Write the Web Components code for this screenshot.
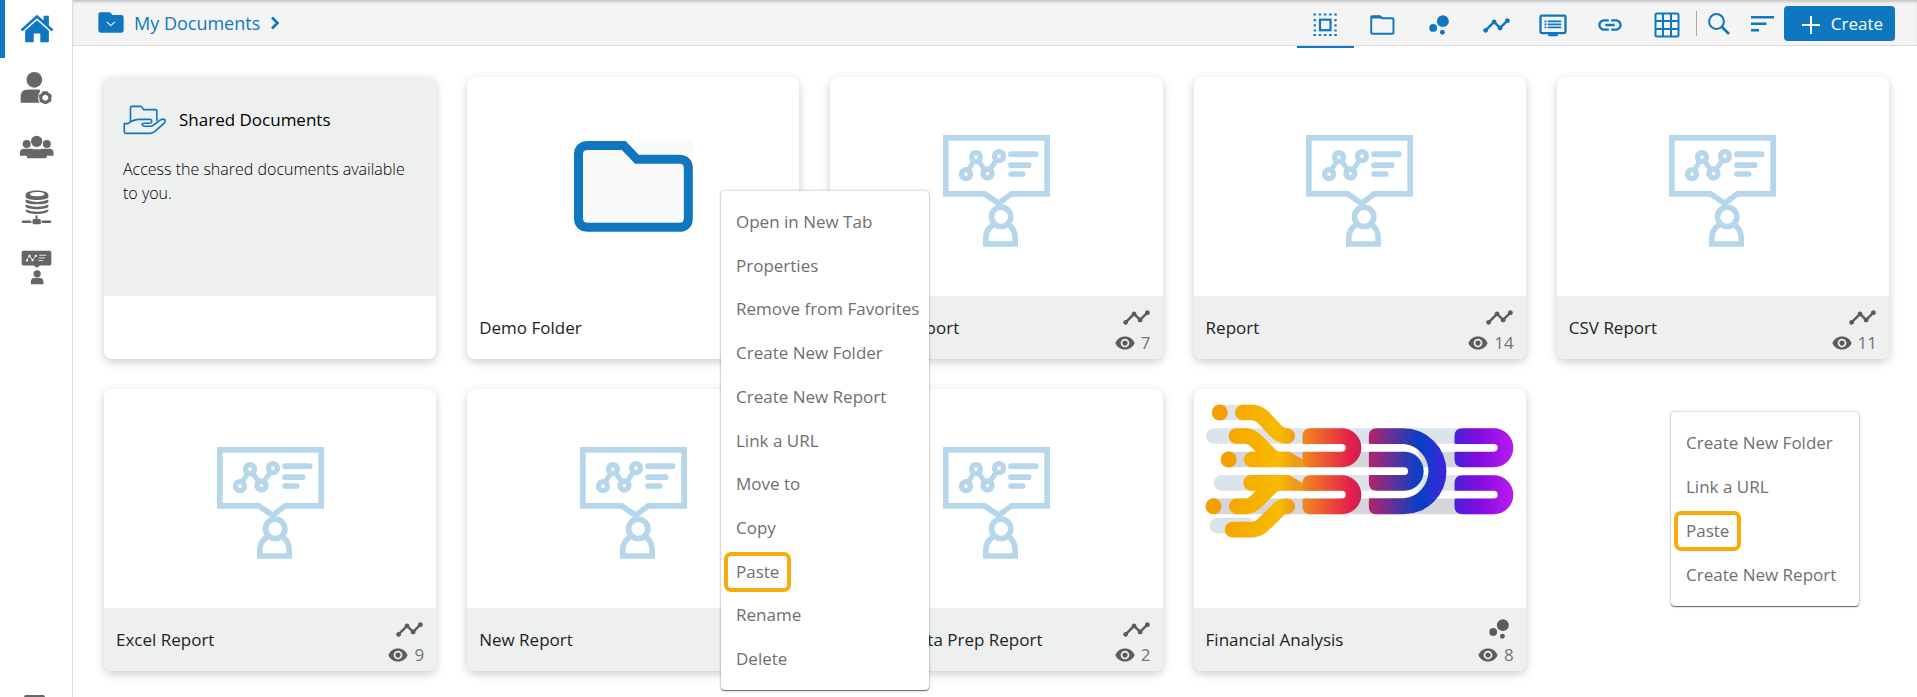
<!DOCTYPE html>
<html lang="en">
<head>
<meta charset="utf-8">
<title>My Documents</title>
<style>
  html, body { height: 100%; }
  body {
    margin: 0;
    overflow: hidden;
    background: #fff;
    color: #222;
    font: 400 17px/24px "Open Sans", "Noto Sans", sans-serif;
    --brand: #0f77c0;
    --muted: #5c5c5c;
    --panel: #eef0f0;
  }
</style>
</head>
<body>
<documents-page></documents-page>

<script>
const ICONS = {
  home: ['60 40 102 88', `<path d="M111 42 L131 60 V45 H147 V75 L161 87 L155 92 L111 53 L67 92 L61 87 Z"/><path d="M111 59 L147 91 V123 q0 3-3 3 H121 V99 H101 V126 H78 q-3 0-3-3 V91 Z"/>`],
  usercog: ['58 211 96 98', `<circle cx="101" cy="237" r="23.500"/><path d="M60 306 V288 Q60 266 82 266 H113 Q120 266 118 272 Q108 288 116 306 Z"/><path fill="none" stroke="currentColor" stroke-width="9" d="M134 277 a13.500 13.500 0 1 1 -.1 0"/><path fill="none" stroke="currentColor" stroke-width="9" stroke-dasharray="7 7.600" d="M134 275 a15.500 15.500 0 1 1 -.1 0"/>`],
  team: ['58 408 104 72', `<circle cx="110.500" cy="427" r="17"/><circle cx="80.500" cy="435" r="12"/><circle cx="141" cy="435" r="12"/><path d="M60 470 V462 Q60 449 73 449 H95 L100 451 H121 L126 449 H149 Q161 449 161 462 V470 H141 V473 Q141 478 136 478 H86 Q81 478 81 473 V470 Z"/>`],
  database: ['62 571 92 106', `<path fill-rule="evenodd" d="M75 586 C75 568 144 568 144 586 V592 C144 604 75 604 75 592 Z M88 584 C88 592 132 592 132 584 C132 575 88 575 88 584 Z"/><path d="M75 600 Q110 614 144 600 V607 C140 617 79 617 75 607 Z M75 615 Q110 629 144 615 V621 C140 632 79 632 75 621 Z M75 630 Q110 644 144 630 V634 C140 647 79 647 75 634 Z"/><rect x="105" y="648" width="6" height="14"/><rect x="96" y="659" width="25" height="16" rx="4"/><rect x="63" y="663" width="30" height="8" rx="4"/><rect x="123" y="663" width="30" height="8" rx="4"/>`],
  presenter: ['62 751 92 106', `<path d="M68 753 H148 q5 0 5 5 V793 q0 5-5 5 H119 L109 805 L99 798 H68 q-5 0-5-5 V758 q0-5 5-5z"/><g stroke="#fff" fill="none" stroke-width="2.500"><path d="M79 782 L87 769 L96 781 L106 769 M116 767 H138 M115 775 H133 M114 783 H128"/></g><g fill="#fff"><circle cx="79" cy="783" r="3.500"/><circle cx="87" cy="769" r="3.500"/><circle cx="96" cy="782" r="3.500"/><circle cx="106" cy="769" r="3.500"/></g><circle cx="110" cy="823" r="11"/><path d="M91 855 V847 Q91 836 102 836 H118 Q129 836 129 847 V855 Z"/>`],
  panel: ['0 0 21 21', `<rect x="1" y="1" width="19" height="19" rx="1" fill="none" stroke="currentColor" stroke-width="2"/>`],
  folderdrop: ['293 35 77 62', `<path d="M300 36 H325 q5 0 8 4 L336 44 H362 q7 0 7 7 V89 q0 7-7 7 H301 q-7 0-7-7 V43 q0-7 6-7z"/><path d="M319 64 L331 75 L343 64" fill="none" stroke="#fff" stroke-width="3"/>`],
  chevron: ['0 0 10 14', `<path d="M2 1.500 L7.500 7 L2 12.500" fill="none" stroke="currentColor" stroke-width="2.600"/>`],
  select: ['0 0 24 24', `<path fill="none" stroke="currentColor" stroke-width="2" stroke-dasharray="2.500 2.700" d="M.5 1.500 H23.800 M.5 22 H23.800"/><path fill="none" stroke="currentColor" stroke-width="2.200" stroke-dasharray="2.200 3" d="M1.800 6 V19 M22.500 6 V19"/><rect x="7" y="6.700" width="10.500" height="10.500" fill="none" stroke="currentColor" stroke-width="2.200"/>`],
  folder: ['240 44 76 62', `<path fill="none" stroke="currentColor" stroke-width="6" d="M243 52 q0-4 4-4 H270 L277 54 H308 q4 0 4 4 V98 q0 4-4 4 H247 q-4 0-4-4z"/><path d="M242 46 H271 L280 55 H242z"/>`],
  bubbles: ['418 44 62 62', `<circle cx="461" cy="63" r="18.500"/><circle cx="431" cy="84" r="12"/><circle cx="459.500" cy="97.500" r="7.500"/>`],
  trend: ['0 5 24 14', `<path d="M23 8c0 1.100-.9 2-2 2-.18 0-.35-.02-.51-.07l-3.560 3.550c.05.16.07.34.07.52 0 1.100-.9 2-2 2s-2-.9-2-2c0-.18.02-.36.07-.52l-2.550-2.550c-.16.05-.34.07-.52.07s-.36-.02-.52-.07l-4.550 4.560c.05.16.07.33.07.51 0 1.100-.9 2-2 2s-2-.9-2-2 .9-2 2-2c.18 0 .35.02.51.07l4.560-4.550C8.020 9.360 8 9.180 8 9c0-1.100.9-2 2-2s2 .9 2 2c0 .18-.02.36-.07.52l2.550 2.550c.16-.05.34-.07.52-.07s.36.02.52.07l3.550-3.560C19.020 8.350 19 8.180 19 8c0-1.100.9-2 2-2s2 .9 2 2z"/>`],
  display: ['749 40 84 70', `<rect x="753" y="45" width="76" height="53" rx="4" fill="none" stroke="currentColor" stroke-width="7"/><path d="M776 100 H806 V105 q0 3-3 3 H779 q-3 0-3-3z M765 60 h6 v5 h-6z M765 69 h6 v5 h-6z M765 78 h6 v5 h-6z M775 60 h41 v5 h-41z M775 69 h41 v5 h-41z M775 78 h41 v5 h-41z"/>`],
  link: ['1 6 22 12', `<path d="M3.900 12c0-1.710 1.390-3.100 3.100-3.100h4V7H7c-2.760 0-5 2.240-5 5s2.240 5 5 5h4v-1.900H7c-1.710 0-3.100-1.390-3.100-3.100zM8 13h8v-2H8v2zm9-6h-4v1.900h4c1.710 0 3.100 1.390 3.100 3.100s-1.390 3.100-3.100 3.100h-4V17h4c2.760 0 5-2.240 5-5s-2.240-5-5-5z"/>`],
  grid: ['0 0 26 26', `<path fill="none" stroke="currentColor" stroke-width="2" d="M1.500 3 q0-1.500 1.500-1.500 H23 q1.500 0 1.500 1.500 V23 q0 1.500-1.500 1.500 H3 q-1.500 0-1.500-1.500z M9 2 V24 M17 2 V24 M2 9 H24 M2 17 H24"/>`],
  search: ['0 0 22 22', `<circle cx="8.500" cy="8.500" r="7.400" fill="none" stroke="currentColor" stroke-width="2"/><path d="M13.500 13.500 L21 21" stroke="currentColor" stroke-width="2.600"/>`],
  sort: ['0 0 23 16', `<path d="M0 0 H23 V2.500 H0z M0 6.500 H15.500 V9 H0z M0 13 H8 V15.500 H0z"/>`],
  plus: ['0 0 18 18', `<path d="M8 0 H10 V8 H18 V10 H10 V18 H8 V10 H0 V8 H8z"/>`],
  eye: ['1 4 22 16', `<path d="M12 4.500C7 4.500 2.730 7.610 1 12c1.730 4.390 6 7.500 11 7.500s9.270-3.110 11-7.500c-1.730-4.390-6-7.500-11-7.500zM12 17c-2.760 0-5-2.240-5-5s2.240-5 5-5 5 2.240 5 5-2.240 5-5 5zm0-8c-1.660 0-3 1.340-3 3s1.340 3 3 3 3-1.340 3-3-1.340-3-3-3z"/>`],
  share: ['97 137 132 92', `<g fill="none" stroke="currentColor" stroke-width="5" stroke-linejoin="round" stroke-linecap="round"><path d="M120 187 V146 q0-5 5-5 H151 q3 0 5 4 L160 151 H197 q4 0 4 4 V184"/><path d="M101 194 H112 Q130 181 148 181 H180 Q186 182 185 188 Q184 193 178 193 H162 Q155 194 156 198 Q158 202 164 202 H182 Q188 202 194 196 L213 182 Q222 178 226 183 Q228 188 222 194 L194 219 Q188 224 181 224 H105 Q101 224 101 220 Z"/></g>`],
  bigfolder: ['342 240 357 279', `<path fill="#fafafa" d="M342 240H699V519H342z"/><path fill="none" stroke="currentColor" stroke-width="27" d="M385.500 256.500 H491 L531 298 H657 q28 0 28 28 V474 q0 28-28 28 H385 q-29.500 0-29.500-28 V284 q0-27.500 30-27.500z"/>`],
  report: ['129 225 321 336', `<g fill="none" stroke="currentColor"><path stroke-width="17" d="M296 430 L254 401.500 H137.500 V233.500 H441.500 V401.500 H334 L292 433"/><path stroke-width="15" d="M198 342 L228 292 L262 340 L297 289"/><path stroke-width="17" stroke-linecap="round" d="M333 282.500 H407 M333 315.500 H386 M333 342 H368"/><circle stroke-width="17" cx="303.500" cy="470.500" r="29"/><path stroke-width="17" d="M280 494 Q257.500 508 257.500 534 V552 H345.500 V534 Q345 508 326 494"/></g><g stroke="currentColor" stroke-width="16" fill="#fff"><circle cx="198" cy="342.500" r="13.500"/><circle cx="228" cy="291.500" r="13.500"/><circle cx="262.500" cy="340.500" r="13.500"/><circle cx="297" cy="288.500" r="13.500"/></g>`],
  bdb: ['78 70 926 402', `
    <defs>
      <linearGradient id="y" gradientUnits="userSpaceOnUse" x1="80" x2="348" y1="0" y2="0"><stop stop-color="#f39c00"/><stop offset=".82" stop-color="#f8bb00"/><stop offset="1" stop-color="#f09a18"/></linearGradient>
      <linearGradient id="r"><stop stop-color="#f08a1c"/><stop offset=".8" stop-color="#e62048"/><stop offset="1" stop-color="#c81e5c"/></linearGradient>
      <linearGradient id="b" gradientUnits="userSpaceOnUse" x1="569" x2="803" y1="0" y2="0"><stop stop-color="#b3246a"/><stop offset=".65" stop-color="#073fc8"/><stop offset="1" stop-color="#4226da"/></linearGradient>
      <linearGradient id="p"><stop stop-color="#4a20d8"/><stop offset=".45" stop-color="#860be0"/><stop offset="1" stop-color="#ba1cf0"/></linearGradient>
    </defs>
    <g fill="none" stroke-width="47" stroke-linecap="round">
      <path stroke="#dce4eb" d="M122 95.500H200M104 166H940M127 306.500H940M115 435H205"/>
      <path stroke="#d5d6dc" d="M149 236.500H940M103 377H940"/>
      <g stroke="url(#y)"><path d="M191.500 95.500H222Q238 97 250 108L288 148Q300 164 318 166H324M172 166H200Q218 168 230 180L262 212Q278 234 300 236.500H324M218 236.600H324L323 236M216 306.600H324L323 306M173 377H202Q218 375 230 363L270 324Q282 308 300 306.500M160 447H222Q238 445 250 434L290 395Q302 379 318 377H324"/></g>
    </g>
    <path stroke="#fff" stroke-width="23" d="M370 201.500H495M370 342H495M569 201.500H680M569 272H675M569 342H680M826 201.500H950M826 342H950"/>
    <g fill="#f3a000"><circle cx="122" cy="95.500" r="24"/><circle cx="148.500" cy="236.500" r="24"/><circle cx="103" cy="377" r="24"/></g>
    <path fill="#fff" d="M680 190a82 82 0 0 1 0 163.500V330a58.500 58.500 0 0 0 0-117z"/>
    <path fill="#dce4eb" d="M733 283H757Q755 310 742 330H712Q731 315 733 283z"/><path fill="#d5d6dc" d="M712 213H735Q755 230 756 260H732Q730 230 712 213z"/>
    <path fill="url(#b)" d="M593 143H673a129 129 0 0 1 0 258H593q-24 0-24-24V357q0-4 4-4H675A82 82 0 0 0 675 190H573q-4 0-4-4V167q0-24 24-24zM573 213H675a58.500 58.500 0 0 1 0 117H593q-24 0-24-24V287q0-4 4-4H675a11.500 11.500 0 0 0 0-23H573q-4 0-4-4V217q0-4 4-4z"/>
    <g fill="url(#r)"><path d="M394 143H488a58.500 58.500 0 0 1 0 117H394q-24 0-24-24V217q0-4 4-4H488a11.500 11.500 0 0 0 0-23H374q-4 0-4-4V167q0-24 24-24z"/><path d="M394 283.500H488a58.500 58.500 0 0 1 0 117H394q-24 0-24-24V357.500q0-4 4-4H488a11.500 11.500 0 0 0 0-23H374q-4 0-4-4V307.500q0-24 24-24z"/></g>
    <g fill="url(#p)"><path d="M850 143H944a58.500 58.500 0 0 1 0 117H850q-24 0-24-24V217q0-4 4-4H944a11.500 11.500 0 0 0 0-23H830q-4 0-4-4V167q0-24 24-24z"/><path d="M850 283.500H944a58.500 58.500 0 0 1 0 117H850q-24 0-24-24V357.500q0-4 4-4H944a11.500 11.500 0 0 0 0-23H830q-4 0-4-4V307.500q0-24 24-24z"/></g>`]
};

class ShadowElement extends HTMLElement {
  connectedCallback() {
    if (this.shadowRoot) return;
    this.attachShadow({ mode: 'open' }).innerHTML = this.render();
  }
  attr(name, fallback = '') { return this.getAttribute(name) ?? fallback; }
}

customElements.define('app-icon', class extends ShadowElement {
  render() {
    const [box, body] = ICONS[this.attr('name')];
    return `<style>
      :host { display: block; flex: none; }
      svg { display: block; width: ${this.attr('w')}px; height: ${this.attr('h')}px; }
    </style><svg viewBox="${box}" fill="currentColor" aria-hidden="true">${body}</svg>`;
  }
});

customElements.define('side-nav', class extends ShadowElement {
  render() {
    const link = (name, w, h, label, cls = '') =>
      `<a href="#${name}" class="${cls}" aria-label="${label}"><app-icon name="${name}" w="${w}" h="${h}"></app-icon></a>`;
    return `<style>
      :host { display: block; box-sizing: border-box; height: 100%; overflow: hidden; background: #fff; border-right: 1px solid #dcdcdc; }
      nav { display: flex; flex-direction: column; height: 100%; }
      a { display: grid; place-items: center; box-sizing: border-box; flex: none; height: 60px; padding-bottom: 2px; color: #666; }
      a.active { height: 58px; border-left: 5px solid var(--brand); padding-right: 4px; color: var(--brand); }
      a.last { margin-top: auto; margin-bottom: -39px; padding-right: 3px; }
    </style><nav aria-label="Main">
      ${link('home', 34, 29, 'Home', 'active')}
      ${link('usercog', 32, 33, 'User settings')}
      ${link('team', 35, 24, 'Groups')}
      ${link('database', 31, 35, 'Data center')}
      ${link('presenter', 31, 35, 'Presenter')}
      ${link('panel', 21, 21, 'More', 'last')}
    </nav>`;
  }
});

customElements.define('top-bar', class extends ShadowElement {
  render() {
    const tab = (name, w, h, label, cls = '') =>
      `<button type="button" class="tab ${cls}" aria-label="${label}"><app-icon name="${name}" w="${w}" h="${h}"></app-icon></button>`;
    return `<style>
      :host { display: flex; box-sizing: border-box; height: 46px; align-items: stretch; padding: 0 22px 0 25px; color: var(--brand);
        background: #f4f4f4; border-bottom: 1px solid #dcdcdc; box-shadow: inset 0 3px 3px -1px #c4c4c4; }
      button { font: inherit; color: inherit; background: none; border: 0; margin: 0; padding: 0; cursor: pointer; }
      a { display: flex; align-items: center; gap: 10px; color: inherit; text-decoration: none; font-size: 18px; margin-right: auto; }
      .tabs { display: flex; }
      .tab { display: grid; place-items: center; box-sizing: content-box; width: 57px; padding-top: 4px; margin-bottom: -3px; border-bottom: 2px solid transparent; }
      .tab.active { border-color: var(--brand); }
      .tools { display: flex; align-items: center; gap: 21px; margin: 11px 10px 9px 0; padding-left: 11px; border-left: 1px solid #a8a8a8; }
      .create { display: flex; align-items: center; gap: 11px; align-self: center; height: 35px; padding: 0 12px 0 18px;
        border-radius: 4px; background: var(--brand); color: #fff; margin-top: 2px; }
      .create app-icon { margin-top: 3px; }
    </style>
    <a href="#my-documents"><app-icon name="folderdrop" w="26" h="21"></app-icon><span>My Documents</span><app-icon name="chevron" w="10" h="14"></app-icon></a>
    <div class="tabs">
      ${tab('select', 24, 24, 'All', 'active')}
      ${tab('folder', 25, 20, 'Folders')}
      ${tab('bubbles', 20, 20, 'Stories')}
      ${tab('trend', 29, 17, 'Dashboards')}
      ${tab('display', 28, 23, 'Reports')}
      ${tab('link', 26, 14, 'Links')}
      ${tab('grid', 26, 26, 'Sheets')}
    </div>
    <div class="tools">
      <button type="button" aria-label="Search"><app-icon name="search" w="22" h="22"></app-icon></button>
      <button type="button" aria-label="Sort"><app-icon name="sort" w="23" h="16"></app-icon></button>
    </div>
    <button type="button" class="create"><app-icon name="plus" w="18" h="18"></app-icon>Create</button>`;
  }
});

customElements.define('doc-card', class extends ShadowElement {
  render() {
    const views = this.attr('views');
    const kind = this.attr('kind', 'trend');
    const [kw, kh] = kind === 'bubbles' ? [20, 20] : [29, 17];
    return `<style>
      :host { display: flex; flex-direction: column; background: #fff; border-radius: 8px; overflow: hidden;
        box-shadow: 0 3px 10px rgba(0, 0, 0, .2); }
      .thumb { height: 219px; box-sizing: border-box; display: flex; flex-direction: column; align-items: center; }
      footer { display: flex; align-items: center; justify-content: space-between; box-sizing: border-box; height: 63px; padding: 0 12px; background: var(--panel); }
      :host([plain]) footer { background: #fff; }
      :host([intro]) .thumb { background: var(--panel); align-items: stretch; }
      h2 { margin: 0; font: inherit; }
      .meta { display: flex; flex-direction: column; align-items: flex-end; justify-content: flex-end; gap: 4px; height: 100%; color: var(--muted); }
      .kind { display: grid; place-items: center; width: 29px; height: 20px; }
      .views { display: flex; align-items: center; gap: 6px; line-height: 24px; margin-bottom: 4px; color: #747474; }
      .views app-icon { color: var(--muted); }
    </style>
    <div class="thumb"><slot></slot></div>
    <footer><h2>${this.attr('name')}</h2>${views ? `<div class="meta">
      <div class="kind"><app-icon name="${kind}" w="${kw}" h="${kh}"></app-icon></div>
      <div class="views"><app-icon name="eye" w="20" h="14"></app-icon>${views}</div></div>` : ''}</footer>`;
  }
});

customElements.define('shared-intro', class extends ShadowElement {
  render() {
    return `<style>
      :host { display: block; padding: 28px 19px 0; color: #000; }
      h2 { display: flex; align-items: center; gap: 13px; margin: 0; font: inherit; }
      app-icon { color: var(--brand); }
      p { margin: 22px 0 0; font-size: 16px; font-weight: 300; }
    </style>
    <h2><app-icon name="share" w="43" h="30"></app-icon><slot name="title"></slot></h2>
    <p><slot></slot></p>`;
  }
});

customElements.define('context-menu', class extends ShadowElement {
  render() {
    return `<style>
      :host { display: flex; flex-direction: column; box-sizing: border-box; padding: 9px 0; background: #fff; border-radius: 4px;
        box-shadow: 0 1px 1px #666, 0 0 3px rgba(0, 0, 0, .3); }
    </style><slot></slot>`;
  }
});

customElements.define('menu-entry', class extends ShadowElement {
  render() {
    return `<style>
      :host { display: flex; flex: 1; }
      button { display: flex; align-items: center; flex: 1; border: 0; margin: 0; padding: 0 12px 0 15px; background: none; color: #6f6f6f; font: inherit; white-space: nowrap; }
      :host([marked]) button { padding-left: 3px; }
      :host([marked]) span { flex: none; margin: -9px 0; padding: 4px 8px; border: 4px solid #faab0c; border-radius: 7px; }
    </style><button type="button" role="menuitem"><span><slot></slot></span></button>`;
  }
});

customElements.define('documents-page', class extends ShadowElement {
  render() {
    const report = '<app-icon class="report" name="report" w="107" h="112"></app-icon>';
    const menu = (cls, items) => `<context-menu class="${cls}" role="menu">${items.map(t =>
      `<menu-entry ${t === 'Paste' ? 'marked' : ''}>${t}</menu-entry>`).join('')}</context-menu>`;
    return `<style>
      :host { display: grid; grid-template: 100% / 73px 1fr; height: 100%; overflow: hidden; }
      .content { min-width: 0; }
      main { display: grid; grid-template-columns: repeat(5, 1fr); gap: 30px 31px; padding: 31px 28px 31px 31px; }
      .report { margin-top: 58px; color: #b5d6eb; }
      .folder { margin-top: 63px; color: var(--brand); }
      .logo { margin-top: 15px; }
      context-menu { position: absolute; }
      .item-menu { left: 721px; top: 191px; width: 208px; height: 499px; }
      .canvas-menu { left: 1671px; top: 412px; width: 188px; height: 194px; }
    </style>
    <side-nav></side-nav>
    <div class="content">
      <top-bar></top-bar>
      <main>
        <doc-card intro plain><shared-intro><span slot="title">Shared Documents</span>Access the shared documents available to you.</shared-intro></doc-card>
        <doc-card plain name="Demo Folder"><app-icon class="folder" name="bigfolder" w="119" h="93"></app-icon></doc-card>
        <doc-card name="Sample Report" views="7">${report}</doc-card>
        <doc-card name="Report" views="14">${report}</doc-card>
        <doc-card name="CSV Report" views="11">${report}</doc-card>
        <doc-card name="Excel Report" views="9">${report}</doc-card>
        <doc-card name="New Report">${report}</doc-card>
        <doc-card name="Sample Data Prep Report" views="2">${report}</doc-card>
        <doc-card name="Financial Analysis" views="8" kind="bubbles"><app-icon class="logo" name="bdb" w="309" h="134"></app-icon></doc-card>
      </main>
    </div>
    ${menu('item-menu', ['Open in New Tab', 'Properties', 'Remove from Favorites', 'Create New Folder', 'Create New Report', 'Link a URL', 'Move to', 'Copy', 'Paste', 'Rename', 'Delete'])}
    ${menu('canvas-menu', ['Create New Folder', 'Link a URL', 'Paste', 'Create New Report'])}`;
  }
});
</script>
</body>
</html>
